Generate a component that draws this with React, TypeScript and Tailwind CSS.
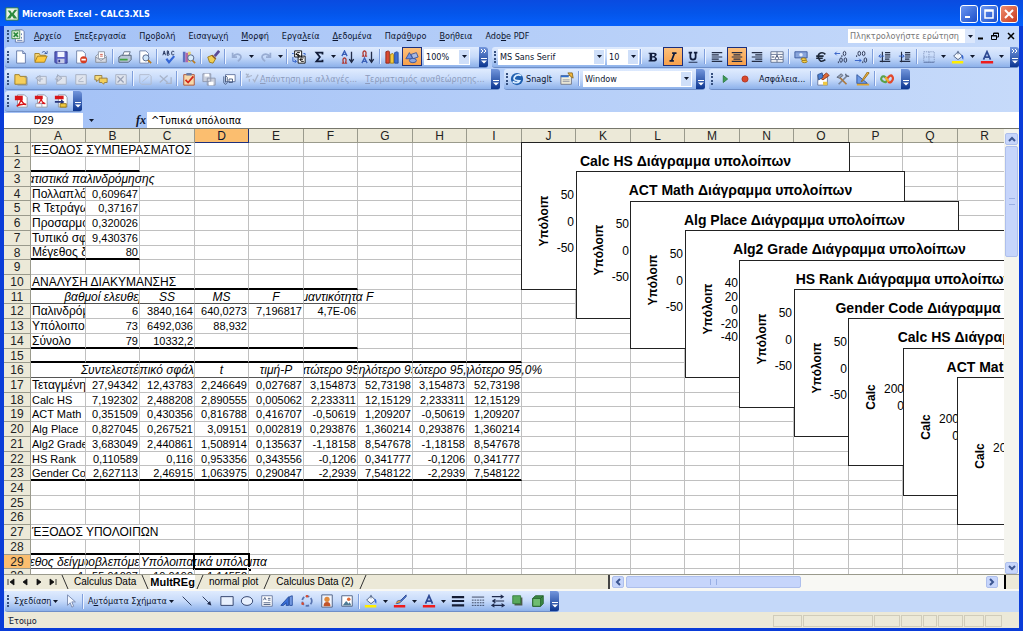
import type { ReactNode } from "react";
import clsx from "clsx";

const icons: Record<string, ReactNode> = {
  excel: (
    <>
      <path d="M1 1h14v14H1z" fill="#e8f3e4" stroke="#2c7a3c" />
      <path d="M3 4l3 0 2 3 3-4h3l-4 5 4 5h-4L8 10l-2 3H2l4-5z" fill="#2b8a3e" />
    </>
  ),
  sheet: (
    <>
      <path d="M5 1h8l2 2v12H5z" fill="#fff" stroke="#5b73a8" />
      <path d="M12 5v2M12 9v2M7 13h6" stroke="#5b73a8" />
      <path d="M1 2h9v9H1z" fill="#dff0d8" stroke="#3c8a45" />
      <path d="M3 4l5 5M8 4L3 9" stroke="#2b8a3e" strokeWidth="2" />
    </>
  ),
  new: (
    <>
      <path d="M3 1h7l3 3v11H3z" fill="#fff" stroke="#5d74a6" />
      <path d="M10 1v3h3" fill="#cfdcf4" stroke="#5d74a6" />
    </>
  ),
  open: (
    <>
      <path d="M1 13V4h5l1 2h6v3" fill="#f7d676" stroke="#a07a1c" />
      <path d="M1 14l3-7h11l-3 7z" fill="#ffc93c" stroke="#a07a1c" />
      <path d="M9 3q3-3 5 1m-2 0h3V1" fill="none" stroke="#37579c" />
    </>
  ),
  save: (
    <>
      <path d="M1 2h14v13H2l-1-1z" fill="#5a62c4" stroke="#32388c" />
      <path d="M4 2h8v6H4z" fill="#f2f5ff" />
      <path d="M4 10h8v5H4z" fill="#c5cbe8" />
      <path d="M5 11h2v3H5z" fill="#32388c" />
    </>
  ),
  permission: (
    <>
      <path d="M3 1h7l3 3v11H3z" fill="#fff" stroke="#6b7fa8" />
      <circle cx="11" cy="11" r="4" fill="#d63c22" />
      <path d="M8.500 11h5" stroke="#fff" strokeWidth="2" />
    </>
  ),
  mail: (
    <>
      <path d="M2 7l6-5 6 5v7H2z" fill="#eef0f4" stroke="#8c93a3" />
      <path d="M5 2h7v8H5z" fill="#fff" stroke="#8c93a3" />
      <path d="M2 8l6 4 6-4v6H2z" fill="#d7dae3" stroke="#8c93a3" />
      <path d="M7 5h3M7 7h3" stroke="#c84b3c" />
    </>
  ),
  print: (
    <>
      <path d="M5 7l2-5h7l-2 5" fill="#fff" stroke="#5c6c84" />
      <path d="M1 8l3-2h11v5l-3 3H1z" fill="#b9c6d6" stroke="#4d5c72" />
      <path d="M2 11h9" stroke="#3fa33f" strokeWidth="2" />
    </>
  ),
  preview: (
    <>
      <path d="M2 1h7l3 3v11H2z" fill="#fff" stroke="#6b7fa8" />
      <circle cx="9" cy="9" r="3.500" fill="#cfe6fb" stroke="#4a5c80" />
      <path d="M11.500 11.500L15 15" stroke="#bb7a1c" strokeWidth="2" />
    </>
  ),
  spell: (
    <>
      <path d="M1 6l1.500-5L4 6M1.500 4h2M6 1v5h1.500q1.500-1 0-2.500H6h1q1.500-1 0-2.500zM14 2q-3-2-3 1.500T14 5" fill="none" stroke="#1d2c55" />
      <path d="M5 10l3 4 6-7" fill="none" stroke="#3567d6" strokeWidth="2.500" />
    </>
  ),
  research: (
    <>
      <path d="M1 2h3v12H1z" fill="#5d6fc0" />
      <path d="M4 3h3v11H4z" fill="#b766a6" />
      <path d="M7 2h3v12H7z" fill="#e9d06d" />
      <circle cx="10" cy="9" r="3.500" fill="#d6ebfb" stroke="#4a5c80" />
      <path d="M12 12l3 3" stroke="#bb7a1c" strokeWidth="2" />
    </>
  ),
  brush: (
    <>
      <path d="M15 1l-5 6" stroke="#5a4a97" strokeWidth="3" />
      <path d="M2 8l5-2 4 4-3 5-4-1z" fill="#f2cf52" stroke="#977618" />
      <path d="M7 6l4 4" stroke="#8c5a2b" strokeWidth="2" />
    </>
  ),
  undo: <path d="M3 3v5h5M3 8q4-5 8-2.500T9 13" fill="none" stroke="#98acd2" strokeWidth="2" />,
  redo: <path d="M13 3v5H8M13 8Q9 3 5 5.500T7 13" fill="none" stroke="#98acd2" strokeWidth="2" />,
  euroConvert: (
    <>
      <path d="M3 1h8v7H3zM7 7h8v8H7z" fill="#fff" stroke="#000" />
      <path d="M9 3Q5 2 5 4.500T9 6.500M4 5h4M13.500 9q-4-1-4 2t4 2M8.500 11h4" fill="none" stroke="#000" />
      <path d="M0 4h2M1 8v5h4M3 11l2 2-2 2M13 4h2v2" fill="none" stroke="#2b59c3" />
    </>
  ),
  sum: <path d="M12 5V3H5l4 5-4 5h7v-2" fill="none" stroke="#111c38" strokeWidth="2" />,
  sortAsc: (
    <>
      <path d="M1 7l3-6 3 6M2 5h4" fill="none" stroke="#3b60b8" strokeWidth="1.500" />
      <path d="M1 15h2q-2-5 1-6 3 1 1 6h2" fill="none" stroke="#b03a34" strokeWidth="1.500" />
      <path d="M12 2v11M9.500 10.500L12 14l2.500-3.500" fill="none" stroke="#222c48" strokeWidth="1.500" />
    </>
  ),
  sortDesc: (
    <>
      <path d="M1 7h2Q1 2 4 1q3 1 1 6h2" fill="none" stroke="#b03a34" strokeWidth="1.500" />
      <path d="M1 15l3-6 3 6M2 13h4" fill="none" stroke="#3b60b8" strokeWidth="1.500" />
      <path d="M12 2v11M9.500 10.500L12 14l2.500-3.500" fill="none" stroke="#222c48" strokeWidth="1.500" />
    </>
  ),
  chart: (
    <>
      <path d="M1 15V2l3-1 1 1v13z" fill="#dc4a32" stroke="#8d2415" />
      <path d="M6 15V5l3-1 1 1v10z" fill="#f5c83c" stroke="#a17a12" />
      <path d="M11 15V3l3-1 1 1v12z" fill="#3d6fd6" stroke="#234a9a" />
    </>
  ),
  drawing: (
    <>
      <path d="M1 10l4-7 4 7z" fill="#6f94e4" stroke="#37529c" />
      <path d="M7 5l6-2 2 5-6 2z" fill="#aab9e0" stroke="#37529c" />
      <ellipse cx="9" cy="12" rx="4" ry="2.500" fill="#8ca6e0" stroke="#37529c" />
    </>
  ),
  bold: <path d="M3 3h6q4 0 3 3-1 1.500-2 2 3 .5 2.500 3T9 13H3v-1.200h1.200V4.200H3zM7 4.500V7h1q2 0 2-1.300T8 4.500zM7 8.500v3h1.200q2 0 2-1.500T8.200 8.500z" fill="#101c3c" />,
  italic: <path d="M7 3.500h5M4 12.500h5M9.500 4l-3 8" stroke="#101c3c" strokeWidth="2" />,
  underline: (
    <>
      <path d="M3 3h4M9 3h4M5 3v5q0 3 3 3t3-3V3" fill="none" stroke="#101c3c" strokeWidth="2" />
      <path d="M3 14h10" stroke="#101c3c" />
    </>
  ),
  left: <path d="M2 3h12M2 5.500h8M2 8h12M2 10.500h8M2 13h12" stroke="#232c44" strokeWidth="1.300" />,
  center: <path d="M2 3h12M4 5.500h8M2 8h12M4 10.500h8M2 13h12" stroke="#232c44" strokeWidth="1.300" />,
  right: <path d="M2 3h12M6 5.500h8M2 8h12M6 10.500h8M2 13h12" stroke="#232c44" strokeWidth="1.300" />,
  merge: (
    <>
      <path d="M1 2h14v12H1zM1 5h14M1 11h14M8 2v3M8 11v3" fill="#fff" stroke="#59698c" />
      <path d="M6 10l2-4 2 4M2 8h3M11 8h3" fill="none" stroke="#1d2c55" />
    </>
  ),
  currency: (
    <>
      <path d="M1 2h14v7H1z" fill="#88a5dc" stroke="#3a589c" />
      <circle cx="8" cy="5.500" r="2" fill="#e6eefc" />
      <ellipse cx="12" cy="13" rx="3" ry="1.500" fill="#f4ce4a" stroke="#997412" />
      <ellipse cx="11" cy="10.500" rx="3" ry="1.500" fill="#f4ce4a" stroke="#997412" />
    </>
  ),
  euro: <path d="M13 5Q10.500 2.500 7.500 3.500T5 8t2.500 4.500T13 11M2.500 7H11M2.500 9.500H10" fill="none" stroke="#1f2838" strokeWidth="1.800" />,
  incDecimal: (
    <>
      <path d="M7 4H1l2-2M1 4l2 2" fill="none" stroke="#2b59c3" />
      <ellipse cx="12" cy="4" rx="1.500" ry="2.500" fill="none" stroke="#222c48" />
      <ellipse cx="8" cy="11.500" rx="1.500" ry="2.500" fill="none" stroke="#222c48" />
      <ellipse cx="13" cy="11.500" rx="1.500" ry="2.500" fill="none" stroke="#222c48" />
      <path d="M9 6v2M5 13v2" stroke="#222c48" />
    </>
  ),
  decDecimal: (
    <>
      <ellipse cx="6" cy="4" rx="1.500" ry="2.500" fill="none" stroke="#222c48" />
      <ellipse cx="11" cy="4" rx="1.500" ry="2.500" fill="none" stroke="#222c48" />
      <ellipse cx="13" cy="11.500" rx="1.500" ry="2.500" fill="none" stroke="#222c48" />
      <path d="M3 6v2M10 13v2" stroke="#222c48" />
      <path d="M1 12h7l-2-2M8 12l-2 2" fill="none" stroke="#2b59c3" />
    </>
  ),
  outdent: (
    <>
      <path d="M8 3h6M8 5.500h6M8 8h6M8 10.500h5M2 13h12M5 2v12" stroke="#232c44" strokeWidth="1.300" />
      <path d="M7 7H1l2-2M1 7l2 2" fill="none" stroke="#2b59c3" />
    </>
  ),
  indent: (
    <>
      <path d="M8 3h6M8 5.500h6M8 8h6M8 10.500h5M2 13h12M4 2v12" stroke="#232c44" strokeWidth="1.300" />
      <path d="M1 7h6L5 5M7 7L5 9" fill="none" stroke="#2b59c3" />
    </>
  ),
  border: (
    <>
      <path d="M2 2h12v12H2zM8 2v12M2 8h12" fill="none" stroke="#8397be" strokeDasharray="1.500 1" />
      <path d="M2 14h12" stroke="#5e76a8" />
    </>
  ),
  fill: (
    <>
      <path d="M3 7l5-5 5 5-5 4z" fill="#f2f6fc" stroke="#44577c" />
      <path d="M8 5V1" stroke="#44577c" />
      <path d="M12 5q3 1 2 6-2-1-2-6" fill="#3567d6" />
      <path d="M1 12.500h13v3H1z" fill="#ffee00" />
    </>
  ),
  fontColor: (
    <>
      <path d="M4 11L8 2l4 9M5.500 8h5" fill="none" stroke="#2f4a94" strokeWidth="2" />
      <path d="M1 12.500h14v3H1z" fill="#ee1c1c" />
    </>
  ),
  lineColor: (
    <>
      <path d="M15 1L9 7l-4 1-1 3 4-1 7-7z" fill="#4d7bdc" stroke="#2b468c" />
      <path d="M2 11l5-4 2 2z" fill="#e6a13c" />
      <path d="M1 12.500h13v3H1z" fill="#ee1c1c" />
    </>
  ),
  folder: (
    <>
      <path d="M1 3h5l1 2h7v9H1z" fill="#f6cf5c" stroke="#9a771b" />
      <path d="M12 6h3v9H4" fill="none" stroke="#8c93a3" />
    </>
  ),
  noteBack: (
    <>
      <path d="M4 5h10v9H4z" fill="#dfe4ee" stroke="#a6aebf" />
      <path d="M7 7V4L2 7l5 4V8h3" fill="#c9d0de" stroke="#9ea8bd" />
    </>
  ),
  noteNext: (
    <>
      <path d="M3 5h11v9H3z" fill="#dfe4ee" stroke="#a6aebf" />
      <path d="M4 6V3l5 4-5 4V8H1" fill="#c9d0de" stroke="#9ea8bd" />
    </>
  ),
  note: <path d="M2 3h12v11H2zM5 10l5-4M5 11h6" fill="#dfe4ee" stroke="#a6aebf" />,
  notes: (
    <>
      <path d="M1 4h8v5H5l-2 2V9H1z" fill="#f7dc7c" stroke="#94793a" />
      <path d="M6 7h9v5h-3l-1 2-2-2H6z" fill="#f4cf58" stroke="#94793a" />
    </>
  ),
  noteDelete: (
    <>
      <path d="M2 3h12v11H2z" fill="#dfe4ee" stroke="#a6aebf" />
      <path d="M4 5l7 7M11 5l-7 7" stroke="#98a1b6" strokeWidth="1.500" />
    </>
  ),
  circleGray: <path d="M2 3h11l2 2v9H4l-2-2zM5 11l7-6" fill="none" stroke="#b0b9cc" />,
  crossGray: <path d="M2 4l9 8M11 4l-9 8M9 13h6V6" fill="none" stroke="#a9b4ca" strokeWidth="1.500" />,
  task: (
    <>
      <path d="M2 3h12v12H2z" fill="#f6d9ab" stroke="#ac4a2c" />
      <path d="M5 1h6v3H5z" fill="#6b7ca4" />
      <path d="M4 9l3 3 6-7" fill="none" stroke="#d4281c" strokeWidth="2" />
    </>
  ),
  versions: (
    <>
      <path d="M1 2h9v9H1zM6 7h9v8H6z" fill="#c9cfdd" stroke="#8a94aa" />
      <path d="M3 2h5v3H3zM8 11h5v4H8z" fill="#fff" />
    </>
  ),
  attach: (
    <>
      <path d="M4 3h11v8H4z" fill="#fff" stroke="#5f719a" />
      <path d="M2 5v7q2 4 4 0V6q-2-3-2 0v6M8 8h4v4H8z" fill="none" stroke="#44577c" />
    </>
  ),
  reply: <path d="M1 2l4 4M4 2L2 6l6-2M9 8l2 3 4-8M5 8v3" fill="none" stroke="#a9b4ca" strokeWidth="1.500" />,
  pdf: (
    <>
      <path d="M4 1h8l3 3v11H4z" fill="#fff" stroke="#8c93a3" />
      <path d="M1 2h9v5H1z" fill="#d8161a" />
      <path d="M3 14q5-4 5-9 1 6 6 7-6-1-11 2" fill="none" stroke="#d8161a" strokeWidth="1.500" />
    </>
  ),
  pdfMail: (
    <>
      <path d="M4 1h8l3 3v11H4z" fill="#fff" stroke="#8c93a3" />
      <path d="M1 2h9v4H1z" fill="#d8161a" />
      <path d="M4 12q4-4 4-7 1 5 5 6-5-1-9 1" fill="none" stroke="#d8161a" strokeWidth="1.300" />
      <path d="M2 11h7v4H2z" fill="#f5f7fc" stroke="#9aa3b7" />
    </>
  ),
  pdfReview: (
    <>
      <path d="M5 1h8l2 3v11H5z" fill="#fff" stroke="#8c93a3" />
      <path d="M1 2h10v4H1z" fill="#d8161a" />
      <path d="M1 8h7V6l4 3-4 3v-2H1z" fill="#27357c" />
      <path d="M7 11h7v4H7z" fill="#f0c93e" stroke="#8f7118" />
    </>
  ),
  snagit: (
    <>
      <circle cx="8" cy="8" r="7" fill="#1f5faf" />
      <path d="M13 4Q7 2 5 6t6 4q-2 4-8 1" fill="none" stroke="#d9ecff" strokeWidth="2" />
    </>
  ),
  snagProfile: (
    <>
      <path d="M1 4h12v10H1z" fill="#f4f0dc" stroke="#6a6f80" />
      <path d="M1 4h9v2H1z" fill="#2f6fd0" />
      <path d="M3 9h8M3 11h8" stroke="#8a8f9f" />
      <path d="M9 1h5l1 6-3-2z" fill="#f1b53a" stroke="#8c6c21" />
    </>
  ),
  play: <path d="M6 4l5 4-5 4z" fill="#3f9c54" stroke="#2a7a40" />,
  record: <circle cx="8" cy="8" r="3.500" fill="#d9482c" stroke="#b1331c" />,
  vb: (
    <>
      <path d="M2 4h11v11H2z" fill="#fff" stroke="#64749a" />
      <path d="M5 7l7-6 3 3-7 5z" fill="#e06b38" stroke="#8d3517" />
      <path d="M2 3l5-2 1 5-5 3z" fill="#4a7fd4" stroke="#2b508c" />
      <path d="M8 11h5v4H8z" fill="#efc844" />
    </>
  ),
  tools: (
    <>
      <path d="M3 14L13 4" stroke="#7b8598" strokeWidth="2" />
      <path d="M3 5l9 9" stroke="#ad7a3e" strokeWidth="2" />
      <path d="M1 6l5-4 2 2-4 3z" fill="#98a2b5" stroke="#5c677c" />
      <path d="M11 2q0 3 4 3" fill="none" stroke="#5c677c" strokeWidth="1.500" />
    </>
  ),
  design: (
    <>
      <path d="M1 3v10h12z" fill="#6d9ae6" stroke="#2c5099" />
      <path d="M15 1l-7 9-2 1 1-2 6-9z" fill="#f2b63b" stroke="#94691a" />
      <path d="M1 14.500h14" stroke="#dfa62f" strokeWidth="2" />
    </>
  ),
  script: (
    <>
      <path d="M8 8Q4 3 2 6t2 5 4-3" fill="none" stroke="#5aa24b" strokeWidth="2.500" />
      <path d="M8 8q4-6 6-3t-1 6-5-3" fill="none" stroke="#e2492c" strokeWidth="2.500" />
      <path d="M6 6l4 5" stroke="#f0ae2d" strokeWidth="2.500" />
    </>
  ),
  pointer: <path d="M4 1v12l3-3 2 5 2-1-2-5h4z" fill="#f3f7ff" stroke="#7485aa" />,
  line: <path d="M3 3l10 10" stroke="#1e2a4c" />,
  arrow: (
    <>
      <path d="M3 3l8 8" stroke="#1e2a4c" />
      <path d="M13 13l-5-1.500L11.500 8z" fill="#1e2a4c" />
    </>
  ),
  rect: <path d="M1 3h14v10H1z" fill="#e9f1fe" stroke="#22335f" />,
  oval: <ellipse cx="8" cy="8" rx="6.500" ry="5" fill="#e9f1fe" stroke="#22335f" />,
  textbox: (
    <>
      <path d="M2 2h12v12H2z" fill="#fff" stroke="#5f719a" />
      <path d="M4 7l1.500-3L7 7M9 5h3M9 7h3M4 10h8M4 12h8" fill="none" stroke="#44577c" />
    </>
  ),
  wordart: (
    <>
      <path d="M1 13L10 3v10H7v-3l-3 3z" fill="#3a6fd8" stroke="#1f4799" />
      <path d="M11 3l3-1v11h-3z" fill="#7fa4ea" stroke="#1f4799" />
    </>
  ),
  diagram: (
    <>
      <circle cx="8" cy="8" r="5.500" fill="none" stroke="#5874b0" strokeWidth="2" strokeDasharray="4 2" />
      <circle cx="8" cy="2.500" r="1.500" fill="#d84b30" />
      <circle cx="3" cy="11" r="1.500" fill="#d84b30" />
    </>
  ),
  clipart: (
    <>
      <path d="M2 1h12v14H2z" fill="#eef3fd" stroke="#44577c" />
      <circle cx="8" cy="6" r="3" fill="#e08a3c" />
      <path d="M4 14q0-5 4-5t4 5z" fill="#c2542a" />
    </>
  ),
  image: (
    <>
      <path d="M2 2h12v12H2z" fill="#fff" stroke="#44577c" />
      <path d="M3 13l4-5 3 3 1-2 2 4z" fill="#4f7b96" />
      <circle cx="10" cy="6" r="2" fill="#dd6a38" />
    </>
  ),
  weights: <path d="M1 3.500h14M1 8h14M1 13h14" stroke="#141c34" strokeWidth="2.500" />,
  dashes: (
    <>
      <path d="M1 3.500h14" stroke="#303a55" />
      <path d="M1 7h14M1 10h14M1 13h14" stroke="#303a55" strokeDasharray="2 1" />
    </>
  ),
  arrows: <path d="M1 3h12M11 1l3 2-3 2M3 8h12M5 6L2 8l3 2M2 13h12M4 11l-3 2 3 2M12 11l3 2-3 2" fill="none" stroke="#1e2a4c" strokeWidth="1.300" />,
  shadow: (
    <>
      <path d="M4 4h9v9H4z" fill="#4d5a4d" />
      <path d="M2 2h9v9H2z" fill="#58a95b" stroke="#357a3b" />
    </>
  ),
  cube: (
    <>
      <path d="M2 5l3-3h9v9l-3 3H2z" fill="#3d8a45" stroke="#24602c" />
      <path d="M2 5h9v9H2z" fill="#6fbd70" stroke="#24602c" />
      <path d="M11 5l3-3" stroke="#24602c" />
    </>
  ),
};

function Icon({ name }: { name: string }) {
  return (
    <svg viewBox="0 0 16 16" className="h-[14px] w-[14px] shrink-0" aria-hidden="true">
      {icons[name]}
    </svg>
  );
}

function Tri() {
  return (
    <svg viewBox="0 0 5 3" className="h-[3px] w-[5px] shrink-0" aria-hidden="true">
      <path d="M0 0h5L2.500 3z" fill="#10182c" />
    </svg>
  );
}

function Tool({ name, on, drop }: { name: string; on?: boolean; drop?: boolean }) {
  return (
    <>
      <button
        aria-label={name}
        className={clsx(
          "flex h-[19px] w-5 shrink-0 items-center justify-center border",
          on ? "border-[#1c2f7c] bg-linear-to-b from-[#fdc07a] to-[#f7a04a]" : "border-transparent"
        )}
      >
        <Icon name={name} />
      </button>
      {drop && (
        <button aria-label={`${name} menu`} className="flex h-4 w-[9px] shrink-0 items-center justify-center">
          <Tri />
        </button>
      )}
    </>
  );
}

function Tools({ names }: { names: string[] }) {
  return names.map((name) => <Tool key={name} name={name} />);
}

const Sep = () => <span className="mx-px h-[15px] w-[2px] shrink-0 border-r border-[#eef4ff] bg-[#7f9fdc]" />;

function Combo({ label, value, className }: { label: string; value: string; className: string }) {
  return (
    <label className={clsx("relative flex h-4 shrink-0 items-center bg-white", className)}>
      <select aria-label={label} className="h-full w-full appearance-none pl-[2px] outline-none">
        <option>{value}</option>
      </select>
      <span className="pointer-events-none absolute inset-y-px right-px flex w-[10px] items-center justify-center bg-[#cfdff9]">
        <Tri />
      </span>
    </label>
  );
}

function Bar({ children, more, className }: { children: ReactNode; more?: boolean; className?: string }) {
  return (
    <div
      className={clsx(
        "flex h-[21px] shrink-0 items-center overflow-hidden rounded-[3px] border-b border-[#6f8fc8] bg-linear-to-b from-[#dfebfe] via-[#c6dafa] to-[#8db1ea]",
        className
      )}
    >
      <span className="mx-[2px] h-3 w-0 shrink-0 border-l-2 border-dotted border-[#36507f]" />
      {children}
      <button
        aria-label="Toolbar options"
        className="ml-auto flex h-full w-[9px] shrink-0 flex-col items-center justify-end gap-1 bg-linear-to-b from-[#7396dc] to-[#0b3590] pb-[3px]"
      >
        {more && (
          <svg viewBox="0 0 6 5" className="h-[5px] w-[6px]" aria-hidden="true">
            <path d="M0 0l2 2-2 2M3 0l2 2-2 2" fill="none" stroke="#fff" />
          </svg>
        )}
        <svg viewBox="0 0 6 6" className="h-[6px] w-[6px]" aria-hidden="true">
          <path d="M0 .5h6" stroke="#fff" />
          <path d="M0 2.500h6l-3 3z" fill="#fff" />
        </svg>
      </button>
    </div>
  );
}

const menus = [
  ["", "Α", "ρχείο"],
  ["", "Ε", "πεξεργασία"],
  ["Π", "ρ", "οβολή"],
  ["Εισαγω", "γ", "ή"],
  ["", "Μ", "ορφή"],
  ["Εργα", "λ", "εία"],
  ["", "Δ", "εδομένα"],
  ["Παρά", "θ", "υρο"],
  ["", "Β", "οήθεια"],
  ["Ado", "b", "e PDF"],
];

type Cell = {
  text?: string;
  span?: number;
  align?: "left" | "center" | "right";
  italic?: boolean;
  small?: boolean;
  clip?: "both" | "left" | "right" | "none";
  selected?: boolean;
};

const left = (text: string): Cell => ({ text, align: "left", clip: "both" });
const num = (text: string): Cell => ({ text, align: "right", small: true, clip: "none" });
const head = (text: string, clip: Cell["clip"] = "both"): Cell => ({ text, align: "center", italic: true, clip });
const wide = (text: string): Cell => ({ text, align: "left", span: 3, clip: "none" });
const series = (name: string, ...values: string[]): Cell[] => [left(name), ...values.map(num)];
const predictor = (name: string, ...values: string[]): Cell[] => [{ ...left(name), small: true }, ...values.map(num)];

const sheet: Record<number, Cell[]> = {
  1: [wide("ΈΞΟΔΟΣ ΣΥΜΠΕΡΑΣΜΑΤΟΣ")],
  3: [{ ...head("Στατιστικά παλινδρόμησης", "none"), span: 2 }],
  4: series("Πολλαπλό R", "0,609647"),
  5: series("R Τετράγωνο", "0,37167"),
  6: series("Προσαρμοσμένο", "0,320026"),
  7: series("Τυπικό σφάλμα", "9,430376"),
  8: series("Μέγεθος δείγματος", "80"),
  10: [wide("ΑΝΑΛΥΣΗ ΔΙΑΚΥΜΑΝΣΗΣ")],
  11: [{}, head("βαθμοί ελευθερίας", "right"), head("SS"), head("MS"), head("F"), head("Σημαντικότητα F", "left")],
  12: series("Παλινδρόμηση", "6", "3840,164", "640,0273", "7,196817", "4,7E-06"),
  13: series("Υπόλοιπο", "73", "6492,036", "88,932"),
  14: series("Σύνολο", "79", "10332,2"),
  16: [
    {},
    head("Συντελεστές", "right"),
    head("Τυπικό σφάλμα"),
    head("t"),
    head("τιμή-P"),
    head("Κατώτερο 95%"),
    head("Υψηλότερο 95%"),
    head("Κατώτερο 95,0%"),
    head("Υψηλότερο 95,0%", "left"),
  ],
  17: series("Τεταγμένη", "27,94342", "12,43783", "2,246649", "0,027687", "3,154873", "52,73198", "3,154873", "52,73198"),
  18: predictor("Calc HS", "7,192302", "2,488208", "2,890555", "0,005062", "2,233311", "12,15129", "2,233311", "12,15129"),
  19: predictor("ACT Math", "0,351509", "0,430356", "0,816788", "0,416707", "-0,50619", "1,209207", "-0,50619", "1,209207"),
  20: predictor("Alg Place", "0,827045", "0,267521", "3,09151", "0,002819", "0,293876", "1,360214", "0,293876", "1,360214"),
  21: predictor("Alg2 Grade", "3,683049", "2,440861", "1,508914", "0,135637", "-1,18158", "8,547678", "-1,18158", "8,547678"),
  22: predictor("HS Rank", "0,110589", "0,116", "0,953356", "0,343556", "-0,1206", "0,341777", "-0,1206", "0,341777"),
  23: predictor("Gender Code", "2,627113", "2,46915", "1,063975", "0,290847", "-2,2939", "7,548122", "-2,2939", "7,548122"),
  27: [wide("ΈΞΟΔΟΣ ΥΠΟΛΟΙΠΩΝ")],
  29: [
    head("Μέγεθος δείγματος"),
    head("Προβλεπόμενο"),
    head("Υπόλοιπα"),
    { ...head("Τυπικά υπόλοιπα", "left"), selected: true },
  ],
  30: [num("1"), num("55,91097"), num("10,0190"), num("1,14552")],
};

// row -> number of columns that carry a rule under them
const thick: Record<number, number> = { 2: 2, 8: 2, 10: 6, 14: 6, 15: 9, 23: 9, 28: 3 };
const thin: Record<number, number> = { 3: 2, 11: 6, 16: 9, 29: 3 };

const columns = "ABCDEFGHIJKLMNOPQRS".split("");

function SheetRow({ row }: { row: number }) {
  const cells = sheet[row] ?? [];
  const used = cells.reduce((sum, cell) => sum + (cell.span ?? 1), 0);
  const all = [...cells, ...Array.from({ length: columns.length - used }, (): Cell => ({}))];
  let col = 0;
  return (
    <tr className={row % 7 === 4 || row % 7 === 1 ? "h-[14px]" : "h-[15px]"}>
      <th
        scope="row"
        className={clsx(
          "relative z-10 border-r border-b border-[#9a9a8c] p-0 font-normal text-[#222]",
          row === 29 ? "bg-[#fbbe6f]" : "bg-[#ece9d8]"
        )}
      >
        {row}
      </th>
      {all.map((cell, i) => {
        const at = col;
        col += cell.span ?? 1;
        return (
          <td
            key={i}
            colSpan={cell.span}
            className={clsx(
              "relative border-b p-0 text-black",
              at < (thick[row] ?? 0)
                ? "border-b-2 border-b-black"
                : at < (thin[row] ?? 0)
                  ? "border-b-[#555]"
                  : "border-b-[#c0c0c0]",
              (row === 3 || row === 11 || row === 16) && at === 0 ? "" : "border-r border-r-[#c0c0c0]"
            )}
          >
            {cell.text && (
              <div
                className={clsx(
                  "flex h-[12px] items-center whitespace-nowrap",
                  cell.small ? "text-[11px]" : "text-[12px]",
                  cell.align === "left" && "justify-start pl-px",
                  cell.align === "center" && "justify-center",
                  cell.align === "right" && "justify-end pr-px",
                  cell.italic && "italic",
                  cell.clip === "both" && "[clip-path:inset(-2px_0)]",
                  cell.clip === "right" && "[clip-path:inset(-2px_0_-2px_-60px)]",
                  cell.clip === "left" && "[clip-path:inset(-2px_-60px_-2px_0)]"
                )}
              >
                {cell.text}
              </div>
            )}
            {cell.selected && (
              <span className="absolute -inset-[2px] border-2 border-black">
                <span className="absolute -right-[3px] -bottom-[3px] h-1 w-1 border-t border-l border-white bg-black" />
              </span>
            )}
          </td>
        );
      })}
    </tr>
  );
}

const residuals = "Διάγραμμα υπολοίπων";
const fit = "Διάγραμμα προσαρμογής";
const halves = [
  { text: "50", y: 52 },
  { text: "0", y: 79 },
  { text: "-50", y: 105 },
];
const hundreds = [
  { text: "200", y: 70 },
  { text: "0", y: 87 },
];
const fours = ["40", "20", "0", "-20", "-40"].map((text, i) => ({ text, y: 52 + Math.round(i * 13.6) }));

const charts = [
  { title: `Calc HS ${residuals}`, axis: "Υπόλοιπ", ticks: halves },
  { title: `ACT Math ${residuals}`, axis: "Υπόλοιπ", ticks: halves },
  { title: `Alg Place ${residuals}`, axis: "Υπόλοιπ", ticks: halves },
  { title: `Alg2 Grade ${residuals}`, axis: "Υπόλοιπ", ticks: fours },
  { title: `HS Rank ${residuals}`, axis: "Υπόλοιπ", ticks: halves },
  { title: `Gender Code ${residuals}`, axis: "Υπόλοιπ", ticks: halves },
  { title: `Calc HS ${fit}`, axis: "Calc", ticks: hundreds },
  { title: `ACT Math ${fit}`, axis: "Calc", ticks: hundreds },
  { title: "", axis: "Calc", ticks: hundreds.slice(0, 1) },
];

function Chart({ index }: { index: number }) {
  const { title, axis, ticks } = charts[index];
  return (
    <section
      className="absolute h-[148px] w-[329px] border border-[#222] bg-white text-black"
      style={{ left: 517 + Math.round(index * 54.5), top: 13 + Math.round(index * 29.4) }}
    >
      {title && (
        <h2 className="flex justify-center pt-[10px] text-[14px] leading-[16px] font-bold whitespace-nowrap">{title}</h2>
      )}
      <span className="absolute top-[78px] left-[22px] -translate-x-1/2 -translate-y-1/2 -rotate-90 text-[12px] leading-[14px] font-bold">
        {axis}
      </span>
      {ticks.map((tick) => (
        <span
          key={tick.text}
          className={clsx(
            "absolute left-0 -translate-y-1/2 text-right text-[12px] leading-[14px]",
            ticks[0].text === "200" ? "w-[55px]" : "w-[52px]"
          )}
          style={{ top: tick.y }}
        >
          {tick.text}
        </span>
      ))}
    </section>
  );
}

function Scroll({ label, d, className }: { label: string; d: string; className?: string }) {
  return (
    <button
      aria-label={label}
      className={clsx("flex shrink-0 items-center justify-center rounded-[2px] border border-[#aebfec] bg-[#c6d5fb]", className)}
    >
      <svg viewBox="0 0 8 8" className="h-2 w-2" aria-hidden="true">
        <path d={d} fill="none" stroke="#3c5691" strokeWidth="2" />
      </svg>
    </button>
  );
}

const tabNav = ["M1 1v6M7 1L3 4l4 3z", "M6 1L2 4l4 3z", "M2 1l4 3-4 3z", "M7 1v6M1 1l4 3-4 3z"];
const panels = ["w-[29px]", "w-[70px]", "w-[26px]", "w-[21px]", "w-[14px]", "w-[25px]", "w-5", "w-[17px]"];

function Slash({ back }: { back?: boolean }) {
  return (
    <svg viewBox="0 0 10 14" className="h-[14px] w-[10px] shrink-0" aria-hidden="true">
      <path d={back ? "M2 0l6 14" : "M8 0L2 14"} stroke="#333" />
    </svg>
  );
}

function WindowButton({ label, red, children }: { label: string; red?: boolean; children: ReactNode }) {
  return (
    <button
      aria-label={label}
      className={clsx(
        "flex h-[18px] w-[18px] items-center justify-center rounded-[3px] border border-white",
        red ? "bg-linear-to-br from-[#ee8c6c] to-[#c8371a]" : "bg-linear-to-br from-[#6c97f2] to-[#1c4cc8]"
      )}
    >
      <svg viewBox="0 0 12 12" className="h-3 w-3" fill="none" stroke="#fff" strokeWidth="2" aria-hidden="true">
        {children}
      </svg>
    </button>
  );
}

export default function App() {
  return (
    <div className="flex h-screen w-full flex-col overflow-hidden bg-[#0a3cd8] font-['DejaVu_Sans_Condensed','Noto_Sans',sans-serif] text-[9px] leading-[12px] text-[#0c1530]">
      <header className="flex h-[26px] shrink-0 items-center gap-[2px] bg-linear-to-b from-[#0a4be0] via-[#0455ea] to-[#0660fc] pt-[2px] pr-[5px] pl-[5px]">
        <Icon name="excel" />
        <h1 className="mr-auto pl-px font-bold text-white">Microsoft Excel - CALC3.XLS</h1>
        <WindowButton label="Minimize">
          <path d="M2 9h5" />
        </WindowButton>
        <WindowButton label="Maximize">
          <path d="M2 2h8v8H2zM2 3h8" strokeWidth="1.500" />
        </WindowButton>
        <WindowButton label="Close" red>
          <path d="M2 2l8 8M10 2l-8 8" />
        </WindowButton>
      </header>

      <div className="mx-1 mb-[3px] flex min-h-0 flex-1 flex-col bg-[#ece9d8]">
        <div className="shrink-0 bg-linear-to-r from-[#a3c1f6] to-[#c6dafa]">
          <nav className="flex h-5 items-center pl-[3px]">
            <span className="mr-[2px] h-3 border-l-2 border-dotted border-[#36507f]" />
            <Icon name="sheet" />
            <div className="flex gap-[13px] pl-[9px]">
              {menus.map(([before, key, after]) => (
                <button key={before + key + after} className="whitespace-nowrap">
                  {before}
                  <u>{key}</u>
                  {after}
                </button>
              ))}
            </div>
            <input
              aria-label="Ερώτηση"
              placeholder="Πληκτρολογήστε ερώτηση"
              className="ml-auto h-[14px] w-[117px] bg-white px-[2px] placeholder:text-[#777]"
            />
            <button aria-label="Ερωτήσεις" className="flex h-[14px] w-[10px] items-center justify-center bg-[#dbe7fc]">
              <Tri />
            </button>
            <button aria-label="Minimize workbook" className="flex h-3 w-3 items-center justify-center">
              <svg viewBox="0 0 8 8" className="h-2 w-2">
                <path d="M1 6.500h5" stroke="#000" strokeWidth="2" />
              </svg>
            </button>
            <button aria-label="Restore workbook" className="flex h-3 w-4 items-center justify-center">
              <svg viewBox="0 0 8 8" className="h-2 w-2">
                <path d="M2.500 3V1h5v4H6M.5 3.500h5v4h-5zM2 1.500h6M0 4h6" fill="none" stroke="#000" />
              </svg>
            </button>
            <button aria-label="Close workbook" className="flex h-3 w-4 items-center justify-center">
              <svg viewBox="0 0 8 8" className="h-2 w-2">
                <path d="M1 1l6 6M7 1L1 7" stroke="#000" strokeWidth="1.500" />
              </svg>
            </button>
          </nav>

          <div className="flex h-[22px] items-center gap-1 overflow-hidden pl-px">
            <Bar more className="w-[483px]">
              <Tools names={["new", "open", "save", "permission", "mail"]} />
              <Sep />
              <Tools names={["print", "preview"]} />
              <Sep />
              <Tools names={["spell", "research"]} />
              <Sep />
              <Tool name="brush" />
              <Sep />
              <Tool name="undo" drop />
              <Tool name="redo" drop />
              <Sep />
              <Tool name="euroConvert" />
              <Tool name="sum" drop />
              <Tools names={["sortAsc", "sortDesc"]} />
              <Sep />
              <Tool name="chart" />
              <Tool name="drawing" on />
              <Combo label="Zoom" value="100%" className="ml-[2px] w-[46px]" />
            </Bar>
            <Bar more className="flex-1">
              <Combo label="Font" value="MS Sans Serif" className="w-[107px]" />
              <Combo label="Size" value="10" className="ml-[2px] w-[32px]" />
              <Sep />
              <Tool name="bold" />
              <Tool name="italic" on />
              <Tool name="underline" />
              <Sep />
              <Tool name="left" />
              <Tool name="center" on />
              <Tools names={["right", "merge"]} />
              <Sep />
              <Tools names={["currency", "euro", "incDecimal", "decDecimal"]} />
              <Sep />
              <Tools names={["outdent", "indent"]} />
              <Sep />
              <Tool name="border" drop />
              <Tool name="fill" drop />
              <Tool name="fontColor" drop />
            </Bar>
          </div>

          <div className="flex h-[22px] items-center gap-1 pl-px">
            <Bar className="w-[495px]">
              <Tools names={["folder", "noteBack", "noteNext", "note", "notes", "noteDelete"]} />
              <Sep />
              <Tools names={["circleGray", "crossGray"]} />
              <Sep />
              <Tools names={["task", "versions", "attach"]} />
              <Sep />
              <button className="flex items-center gap-px pl-[2px] whitespace-nowrap text-[#8d9cbd]">
                <Icon name="reply" />
                <span>
                  <u>Α</u>πάντηση με αλλαγές...
                </span>
              </button>
              <button className="pl-2 whitespace-nowrap text-[#8d9cbd]">
                <u>Τ</u>ερματισμός αναθεώρησης...
              </button>
            </Bar>
            <Bar className="w-[201px]">
              <button className="flex w-[47px] items-center gap-[2px] whitespace-nowrap">
                <Icon name="snagit" />
                SnagIt
              </button>
              <Tool name="snagProfile" />
              <Sep />
              <Combo label="Capture" value="Window" className="ml-[2px] w-[109px]" />
            </Bar>
            <Bar className="w-[201px]">
              <Tools names={["play", "record"]} />
              <button className="px-1 whitespace-nowrap">Ασφάλεια...</button>
              <Sep />
              <Tools names={["vb", "tools", "design"]} />
              <Sep />
              <Tool name="script" />
            </Bar>
          </div>

          <div className="flex h-[22px] items-center pl-px">
            <Bar className="w-[77px]">
              <Tools names={["pdf", "pdfMail", "pdfReview"]} />
            </Bar>
          </div>

          <div className="flex h-[16px] items-center font-['Liberation_Sans',sans-serif] text-[12px]">
            <input aria-label="Name box" defaultValue="D29" className="h-[15px] w-[79px] bg-white text-center text-[11px] text-black" />
            <button aria-label="Names" className="flex w-4 justify-center">
              <Tri />
            </button>
            <button aria-label="Insert function" className="ml-auto w-3 shrink-0 font-['Liberation_Serif',serif] font-bold italic">
              fx
            </button>
            <input
              aria-label="Formula"
              defaultValue="^Τυπικά υπόλοιπα"
              className="h-[16px] w-[calc(100%-143px)] bg-white pl-1 font-['DejaVu_Sans_Condensed','Noto_Sans',sans-serif] text-[11px] text-black"
            />
          </div>
        </div>

        <main className="flex min-h-0 flex-1 border-t border-[#77776c]">
          <div className="relative min-w-0 flex-1 overflow-hidden bg-white font-['Liberation_Sans',sans-serif] text-[12px] leading-[12px]">
            <table className="w-0 table-fixed border-separate border-spacing-0">
              <colgroup>
                <col className="w-[27px]" />
                {columns.map((name, i) => (
                  <col key={name} className={i % 2 ? "w-[54px]" : "w-[55px]"} />
                ))}
              </colgroup>
              <thead>
                <tr className="h-[14px]">
                  <th className="border-r border-b border-[#9a9a8c] bg-[#ece9d8] p-0" />
                  {columns.map((name) => (
                    <th
                      key={name}
                      scope="col"
                      className={clsx(
                        "border-r border-b p-0 font-normal",
                        name === "D" ? "border-[#1c2f7c] bg-[#fbbe6f]" : "border-[#9a9a8c] bg-[#ece9d8] text-[#222]"
                      )}
                    >
                      {name}
                    </th>
                  ))}
                </tr>
              </thead>
              <tbody>
                {Array.from({ length: 30 }, (_, i) => (
                  <SheetRow key={i} row={i + 1} />
                ))}
              </tbody>
            </table>
            {charts.map((_, i) => (
              <Chart key={i} index={i} />
            ))}
          </div>
          <div className="flex w-[15px] shrink-0 flex-col bg-[#f5f5ef] px-px pt-1">
            <Scroll label="Scroll up" d="M1 6l3-3 3 3" className="h-3" />
            <div className="mt-px flex h-[111px] items-center justify-center rounded-[2px] border border-[#aebfec] bg-[#c6d5fb]">
              <span className="h-[7px] w-[6px] border-y border-[#98aee4]" />
            </div>
            <Scroll label="Scroll down" d="M1 2l3 3 3-3" className="mt-auto h-3" />
          </div>
        </main>

        <div className="flex h-[15px] shrink-0 items-center border-t border-[#9a9a8c] font-['Liberation_Sans',sans-serif] text-[10px] text-black">
          {tabNav.map((d) => (
            <button key={d} aria-label="Scroll tabs" className="flex w-[14px] justify-center">
              <svg viewBox="0 0 8 8" className="h-2 w-2" aria-hidden="true">
                <path d={d} fill="#111" stroke="#111" strokeWidth=".8" />
              </svg>
            </button>
          ))}
          <Slash back />
          <button className="px-1 whitespace-nowrap">Calculus Data</button>
          <Slash back />
          <button className="h-full bg-white text-[11px] font-bold">MultREg</button>
          <Slash />
          <button className="px-1 whitespace-nowrap">normal plot</button>
          <Slash />
          <button className="px-1 whitespace-nowrap">Calculus Data (2)</button>
          <Slash />
          <div className="ml-auto flex h-full w-[396px] items-center border-l-2 border-[#444] bg-[#f8f8f4] pl-[2px]">
            <Scroll label="Scroll left" d="M6 1L3 4l3 3" className="h-3 w-3" />
            <div className="ml-[2px] flex h-3 w-[175px] items-center justify-center rounded-[2px] border border-[#aebfec] bg-[#c6d5fb]">
              <span className="h-[6px] w-[7px] border-x border-[#98aee4]" />
            </div>
            <Scroll label="Scroll right" d="M2 1l3 3-3 3" className="mr-[6px] ml-auto h-3 w-3" />
          </div>
          <span className="h-full w-[15px] border-l-2 border-black" />
        </div>

        <div className="flex h-[23px] shrink-0 items-center border-t-2 border-[#f8f8f4] bg-[#c4d8f9] pl-px">
          <Bar className="w-[554px]">
            <button className="flex w-[50px] items-center justify-between pr-[3px] pl-[3px] whitespace-nowrap">
              <span>
                Σ<u>χ</u>εδίαση
              </span>
              <Tri />
            </button>
            <Tool name="pointer" />
            <Sep />
            <button className="flex w-[92px] items-center justify-between pr-[3px] pl-[3px] whitespace-nowrap">
              <span>
                Α<u>υ</u>τόματα Σχήματα
              </span>
              <Tri />
            </button>
            <Tools names={["line", "arrow", "rect", "oval", "textbox", "wordart", "diagram", "clipart", "image"]} />
            <Sep />
            <Tool name="fill" drop />
            <Tool name="lineColor" drop />
            <Tool name="fontColor" drop />
            <Tools names={["weights", "dashes", "arrows", "shadow", "cube"]} />
          </Bar>
        </div>

        <footer className="flex h-4 shrink-0 items-center pt-px pr-4 pl-1">
          <span className="mr-auto">Έτοιμο</span>
          {panels.map((width, i) => (
            <span key={i} className={clsx("mr-px h-3 border border-[#d0ccba]", width)} />
          ))}
        </footer>
      </div>
    </div>
  );
}
